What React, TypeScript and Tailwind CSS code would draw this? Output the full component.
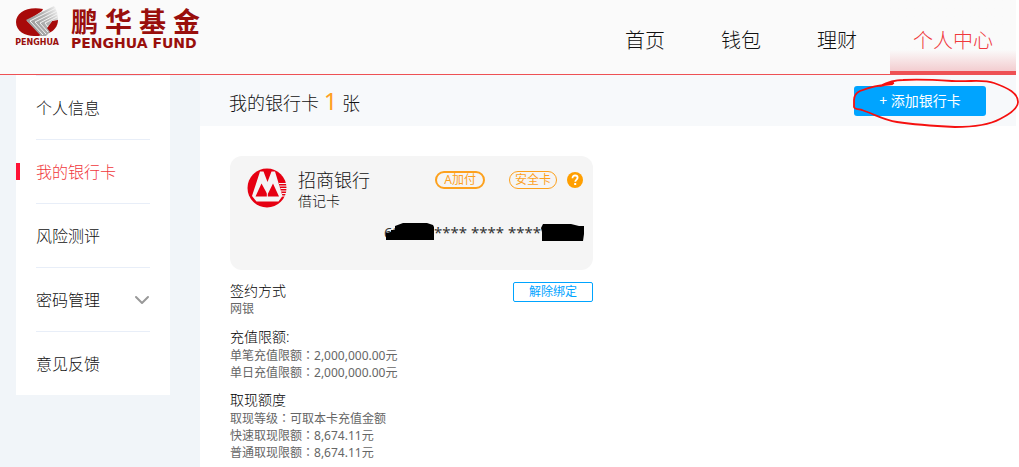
import { ChevronDown } from "lucide-react";

const NAV = [
  { label: "首页", active: false },
  { label: "钱包", active: false },
  { label: "理财", active: false },
  { label: "个人中心", active: true },
];

const MENU = [
  { label: "个人信息" },
  { label: "我的银行卡", active: true },
  { label: "风险测评" },
  { label: "密码管理", expandable: true },
  { label: "意见反馈" },
];

function Logo() {
  return (
    <a href="#" className="flex items-start gap-3 text-[#990f0c]">
      <div className="flex w-11 flex-col items-center">
        <svg viewBox="0 0 44 31" className="h-[31px] w-11">
          <defs>
            <linearGradient id="fade" gradientUnits="userSpaceOnUse" x1="12" y1="20" x2="41" y2="2">
              <stop offset="0" stopColor="#979797" />
              <stop offset="0.6" stopColor="#b4b4b4" />
              <stop offset="1" stopColor="#ececec" />
            </linearGradient>
          </defs>
          <path d="M28 3C12 0 1 7 1 16c0 9 9 14 18 14 3 0 6 0 8-1L12 15 27 5z" fill="#a80a0a" />
          <path d="M43 14c0 6-4 11-9 13l-3-4 6-8z" fill="#a80a0a" />
          <path
            d="M39 0 11 14l15 16h5l4-4-3-4 6-8h5l-1-8z"
            fill="url(#fade)"
          />
          <g fill="none" stroke="#f4f4f4" strokeWidth="1">
            <path d="M41 2 15 15l13 14" />
            <path d="M42 5 20 16l11 12" />
            <path d="M42 8 25 17l8 9" />
            <path d="M42 11 30 17l3 4" />
          </g>
        </svg>
        <span className="font-['DejaVu_Sans',sans-serif] text-[8px] leading-[12px] font-bold">
          PENGHUA
        </span>
      </div>
      <div>
        <div className="flex gap-[7px] text-[27px] leading-[31px] font-bold">
          <span className="h-[31px]">鹏</span>
          <span className="h-[31px]">华</span>
          <span className="h-[31px]">基</span>
          <span className="h-[31px]">金</span>
        </div>
        <div className="font-['DejaVu_Sans',sans-serif] text-[14px] leading-[12px] font-bold">
          PENGHUA FUND
        </div>
      </div>
    </a>
  );
}

function Header() {
  return (
    <header className="flex h-[75px] justify-between border-b border-[#ee5154] bg-[#fafafa] pl-[15px]">
      <div className="pt-[6px]">
        <Logo />
      </div>
      <nav className="flex gap-2.5 text-[20px] leading-[30px] font-light">
        {NAV.map((item) => (
          <a
            key={item.label}
            href="#"
            className={
              item.active
                ? "h-[75px] border-b-4 border-[#ee5154] bg-linear-to-b from-[#fafafa] from-70% to-[#f3cdd0] px-[23px] pt-[26px] text-[#f0383c]"
                : "h-[74px] px-[23px] pt-[26px] text-[#111]"
            }
          >
            {item.label}
          </a>
        ))}
      </nav>
    </header>
  );
}

function Sidebar() {
  return (
    <aside className="w-[200px] shrink-0 bg-[#f1f5f9] pr-[30px] pl-4">
      <ul className="bg-white text-[16px] leading-[24px] font-light">
        {MENU.map((item) => (
          <li key={item.label} className="flex h-16 items-center">
            <span className={item.active ? "h-[17px] w-1 bg-[#ff1236]" : "w-1"} />
            <a
              href="#"
              className={`mr-5 ml-4 flex h-full flex-1 items-center justify-between border-t border-[#e8eef8] ${
                item.active ? "text-[#f0383c]" : "text-[#111]"
              }`}
            >
              {item.label}
              {item.expandable && <ChevronDown className="-mr-1 h-6 w-6 text-[#999]" strokeWidth={2} />}
            </a>
          </li>
        ))}
      </ul>
    </aside>
  );
}

function BankLogo() {
  return (
    <svg viewBox="0 0 40 40" className="h-10 w-10">
      <circle cx="20" cy="20" r="19.5" fill="#e60012" />
      <path
        d="M13 3.500h3.500L20.500 14 24.500 3.500H28L35.500 28l-4 5.500h-22L5 28z"
        fill="#f5f5f5"
      />
      <path d="M14.500 15.500 8.500 28.500h23.500L26 15.500l-5.500 11z" fill="#e60012" />
      <path d="M20.300 15v14" stroke="#f5f5f5" strokeWidth="1" />
      <path
        d="M32 15.500h8M32.500 18h7.500M33.500 20.500h6.500M34 23h6M35 25.500h4.500M35 28h4"
        stroke="#f5f5f5"
        strokeWidth="1"
      />
    </svg>
  );
}

function BankCard() {
  return (
    <div className="h-[114px] rounded-xl bg-[#f5f5f5] pt-3 pr-2 pl-[17px]">
      <div className="flex items-start">
        <BankLogo />
        <div className="ml-[11px] flex-1 font-light text-[#111]">
          <div className="text-[18px] leading-[24px]">招商银行</div>
          <div className="text-[14px] leading-[18px]">借记卡</div>
        </div>
        <div className="mt-[3px] flex items-center text-[12px] leading-[14px] text-[#fda11d]">
          <span className="rounded-full border-2 border-[#fda11d] px-[7px]">A加付</span>
          <span className="ml-6 rounded-full border border-[#fda11d] px-[5px] py-px">安全卡</span>
          <button type="button" aria-label="安全卡说明" className="mr-0.5 ml-2.5">
            <svg viewBox="0 0 16 16" className="h-4 w-4">
              <circle cx="8" cy="8" r="8" fill="#ff9f00" />
              <path
                d="M5.500 6.200c0-1.700 1.100-2.700 2.600-2.700s2.500.9 2.500 2.300c0 1.800-2.300 1.900-2.300 4"
                fill="none"
                stroke="#fff"
                strokeWidth="1.800"
              />
              <rect x="7.200" y="11" width="2" height="2" fill="#fff" />
            </svg>
          </button>
        </div>
      </div>
      <div className="mt-[11px] flex items-center justify-end text-[15px] leading-[22px] text-[#333]">
        <span className="relative w-[50px]">
          62
          <svg viewBox="0 0 50 20" className="absolute top-0 left-0 h-5 w-[50px]">
            <path d="M2 19V12l5-1V9h4V5l8-3h24l6 2 2 4-1 2v9z" fill="#000" />
          </svg>
        </span>
        <span>**** **** ****</span>
        <svg viewBox="0 0 44 20" className="h-5 w-11">
          <path d="M1 19V10L0 6l2-4h28l8 2h5v8l-1 7z" fill="#000" />
        </svg>
      </div>
    </div>
  );
}

// the TC face centres the full-width colon
const Colon = () => <span className="font-['Noto_Sans_CJK_TC',sans-serif]">：</span>;

function Limits({ title, rows }: { title: string; rows: { name: string; value?: string }[] }) {
  return (
    <section>
      <h3 className="text-[14px] leading-[18px] font-light text-black">{title}</h3>
      {rows.map((row) => (
        <p key={row.name} className="h-[17px] text-[12px] leading-[17px] text-[#666]">
          {row.name}
          {row.value && (
            <>
              <Colon />
              {row.value}
            </>
          )}
        </p>
      ))}
    </section>
  );
}

function Content() {
  return (
    <main className="flex-1 bg-white">
      <div className="relative flex h-[51px] items-center justify-between bg-[#f7f9fb] pr-[30px] pl-[29px]">
        <h2 className="pt-0.5 text-[18px] leading-[30px] font-light text-[#111]">
          我的银行卡 <span className="text-[24px] font-normal text-[#ff9f22]">1</span> 张
        </h2>
        <button
          type="button"
          className="h-[30px] w-[132px] rounded-[3px] bg-[#00a4ff] text-[14px] text-white"
        >
          + 添加银行卡
        </button>
        <svg
          viewBox="0 0 168 52"
          className="pointer-events-none absolute top-[3px] -right-[3px] h-[52px] w-[168px]"
        >
          <path
            d="M42 6C26 7 16 10 9 13 5 15 3 18 3 22v7c0 2 3 2 8 3 14 5 22 10 35 12 20 3 38 4 58 5 20 0 34-2 45-8 10-5 18-11 18-17 0-9-10-14-24-19C132 1 120 4 101 3 86 2 66 1 52 2c-8 0-15 2-23 6l14-3"
            fill="none"
            stroke="#f5100f"
            strokeWidth="1.800"
          />
        </svg>
      </div>
      <div className="mt-[30px] ml-[30px] w-[363px]">
        <BankCard />
        <div className="mt-3 flex items-start justify-between">
          <div className="flex flex-col gap-[11px]">
            <Limits title="签约方式" rows={[{ name: "网银" }]} />
            <Limits
              title="充值限额:"
              rows={[
                { name: "单笔充值限额", value: "2,000,000.00元" },
                { name: "单日充值限额", value: "2,000,000.00元" },
              ]}
            />
            <Limits
              title="取现额度"
              rows={[
                { name: "取现等级", value: "可取本卡充值金额" },
                { name: "快速取现限额", value: "8,674.11元" },
                { name: "普通取现限额", value: "8,674.11元" },
              ]}
            />
          </div>
          <button
            type="button"
            className="h-5 w-20 rounded-xs border border-[#00a4ff] text-[12px] leading-[16px] text-[#00a4ff]"
          >
            解除绑定
          </button>
        </div>
      </div>
    </main>
  );
}

export default function App() {
  return (
    <div className="flex min-h-screen flex-col bg-white pr-[3px] font-['Noto_Sans','Noto_Sans_CJK_SC',sans-serif]">
      <Header />
      <div className="flex flex-1">
        <Sidebar />
        <Content />
      </div>
    </div>
  );
}
